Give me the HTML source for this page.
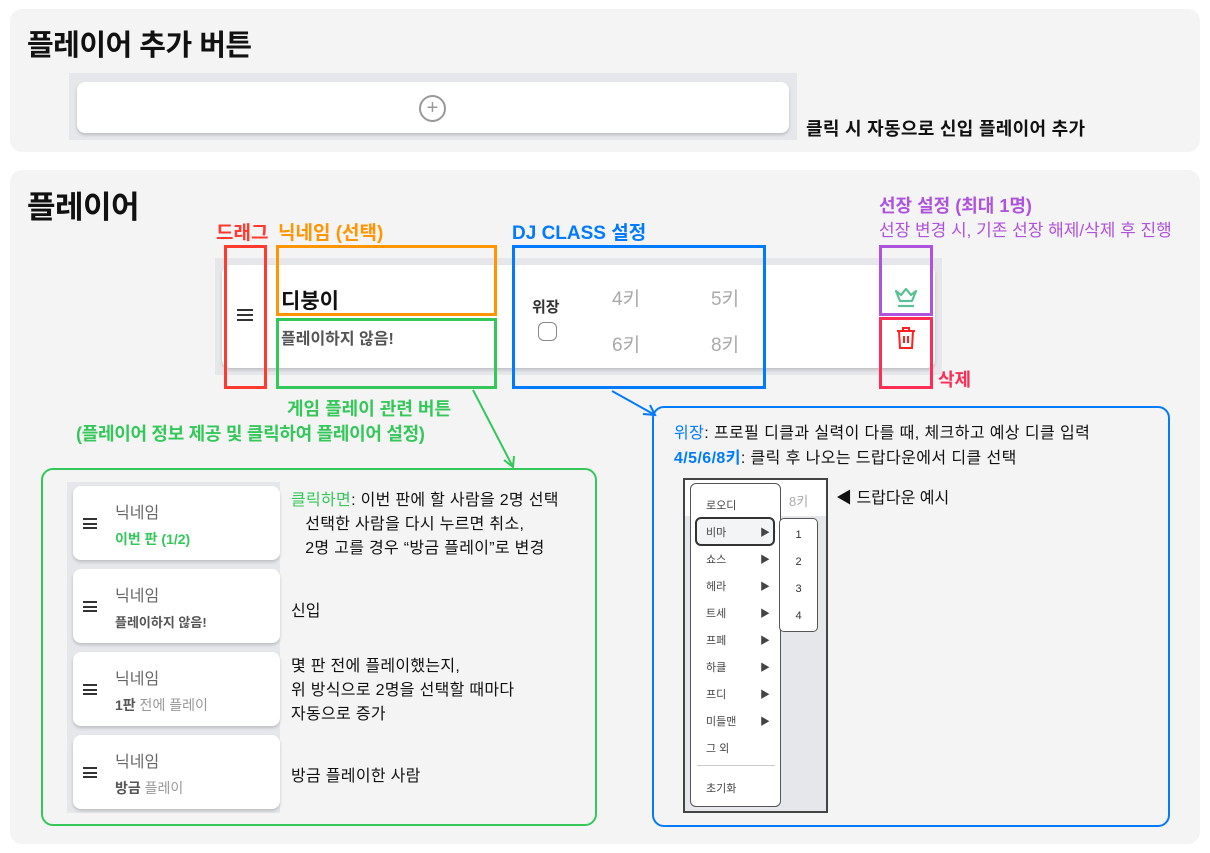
<!DOCTYPE html>
<html><head><meta charset="utf-8"><style>
*{margin:0;padding:0;box-sizing:border-box}
body{width:1210px;height:853px;background:#fff;font-family:"Liberation Sans","Noto Sans CJK KR",sans-serif;position:relative;overflow:hidden;color:#111}
.a{position:absolute;white-space:nowrap}
.panel{position:absolute;background:#f4f4f4;border-radius:12px}
.box{position:absolute;border:3px solid}
.card{position:absolute;background:#fff;border-radius:8px;box-shadow:0 2px 3px rgba(0,0,0,.18)}
.ham{position:absolute;width:16px;height:12px;border-top:2px solid #333;border-bottom:2px solid #333}
.ham:after{content:"";position:absolute;left:0;right:0;top:3px;border-top:2px solid #333}
.mi{position:absolute;left:16px;font-size:11px;color:#444}
.tri{position:absolute;left:70px;font-size:10px;color:#444}
</style></head><body>
<div class="panel" style="left:10px;top:9px;width:1190px;height:143px"></div>
<div class="a" style="left:27px;top:22px;font-size:29px;font-weight:bold;letter-spacing:-0.5px">플레이어 추가 버튼</div>
<div class="a" style="left:69px;top:73px;width:728px;height:67px;background:#e5e7eb"></div>
<div class="card" style="left:77px;top:82px;width:712px;height:51px"></div>
<div class="a" style="left:419px;top:95px;width:27px;height:27px;border:2px solid #999;border-radius:50%;text-align:center;line-height:22px;font-size:20px;color:#999">+</div>
<div class="a" style="left:806px;top:115px;font-size:18px;font-weight:bold;letter-spacing:0.3px">클릭 시 자동으로 신입 플레이어 추가</div>

<div class="panel" style="left:10px;top:170px;width:1190px;height:674px"></div>
<div class="a" style="left:27px;top:182px;font-size:31px;font-weight:bold;letter-spacing:-0.5px">플레이어</div>
<div class="a" style="left:215px;top:258px;width:727px;height:117px;background:#e5e7eb"></div>
<div class="card" style="left:222px;top:265px;width:713px;height:103px"></div>
<div class="ham" style="left:237px;top:309px"></div>
<div class="a" style="left:281px;top:285px;font-size:21px;font-weight:bold">디붕이</div>
<div class="a" style="left:281px;top:325px;font-size:16px;font-weight:bold;color:#555">플레이하지 않음!</div>
<div class="a" style="left:532px;top:296px;font-size:15px;font-weight:bold;color:#333">위장</div>
<div class="a" style="left:538px;top:322px;width:19px;height:19px;border:1.5px solid #888;border-radius:6px"></div>
<div class="a" style="left:612px;top:284px;font-size:19px;color:#aaa">4키</div>
<div class="a" style="left:711px;top:284px;font-size:19px;color:#aaa">5키</div>
<div class="a" style="left:612px;top:330px;font-size:19px;color:#aaa">6키</div>
<div class="a" style="left:711px;top:330px;font-size:19px;color:#aaa">8키</div>
<svg class="a" style="left:893px;top:285px" width="26" height="26" viewBox="0 0 26 26" fill="none" stroke="#5cbf95" stroke-width="2.2"><path d="M3 6l4 10h12l4-10-5 4-5-6-5 6z" stroke-linejoin="round"/><path d="M5 21h16"/></svg>
<svg class="a" style="left:894px;top:326px" width="24" height="24" viewBox="0 0 24 24" fill="none" stroke="#ff2020" stroke-width="2"><path d="M3 5h18M9 5V2h6v3M5 5l1 17h12l1-17M10 10v7M14 10v7"/></svg>

<div class="box" style="left:224px;top:245px;width:43px;height:144px;border-color:#ff3b30"></div>
<div class="a" style="left:216px;top:218px;font-size:19px;font-weight:bold;color:#ff3b30">드래그</div>
<div class="box" style="left:276px;top:245px;width:221px;height:71px;border-color:#ff9500"></div>
<div class="a" style="left:278px;top:218px;font-size:19px;font-weight:bold;color:#ff9500">닉네임 (선택)</div>
<div class="box" style="left:276px;top:318px;width:221px;height:71px;border-color:#34c759"></div>
<div class="box" style="left:512px;top:245px;width:254px;height:144px;border-color:#007aff"></div>
<div class="a" style="left:512px;top:218px;font-size:19px;font-weight:bold;color:#007aff">DJ CLASS 설정</div>
<div class="box" style="left:879px;top:245px;width:54px;height:71px;border-color:#af52de"></div>
<div class="box" style="left:879px;top:317px;width:54px;height:72px;border-color:#ff2d55"></div>
<div class="a" style="left:938px;top:366px;font-size:18px;font-weight:bold;color:#ff2d55">삭제</div>
<div class="a" style="left:879px;top:192px;font-size:18px;font-weight:bold;color:#af52de">선장 설정 (최대 1명)</div>
<div class="a" style="left:879px;top:216px;font-size:17px;color:#af52de">선장 변경 시, 기존 선장 해제/삭제 후 진행</div>
<div class="a" style="left:287px;top:395px;font-size:18px;font-weight:bold;color:#34c759">게임 플레이 관련 버튼</div>
<div class="a" style="left:76px;top:420px;font-size:18px;font-weight:bold;color:#34c759;letter-spacing:-0.3px">(플레이어 정보 제공 및 클릭하여 플레이어 설정)</div>
<svg class="a" style="left:0;top:0" width="1210" height="853"><path d="M473 390L513 467M504 460l9 7 1-11" stroke="#34c759" stroke-width="2" fill="none"/><path d="M612 391L655 415M643 414l12 1-5-10" stroke="#007aff" stroke-width="2" fill="none"/></svg>

<div class="a" style="left:41px;top:468px;width:556px;height:358px;border:2px solid #34c759;border-radius:12px"></div>
<div class="a" style="left:67px;top:482px;width:213px;height:331px;background:#e5e7eb"></div>
<div class="card" style="left:73px;top:486px;width:207px;height:74px"></div>
<div class="card" style="left:73px;top:569px;width:207px;height:74px"></div>
<div class="card" style="left:73px;top:652px;width:207px;height:74px"></div>
<div class="card" style="left:73px;top:735px;width:207px;height:74px"></div>
<div class="ham" style="left:83px;top:518px;width:14px;height:11px"></div>
<div class="ham" style="left:83px;top:601px;width:14px;height:11px"></div>
<div class="ham" style="left:83px;top:684px;width:14px;height:11px"></div>
<div class="ham" style="left:83px;top:767px;width:14px;height:11px"></div>
<div class="a" style="left:115px;top:499px;font-size:16px;color:#666">닉네임</div>
<div class="a" style="left:115px;top:529px;font-size:14px;font-weight:bold;color:#34c759">이번 판 (1/2)</div>
<div class="a" style="left:115px;top:582px;font-size:16px;color:#666">닉네임</div>
<div class="a" style="left:115px;top:612px;font-size:13px;font-weight:bold;color:#555">플레이하지 않음!</div>
<div class="a" style="left:115px;top:665px;font-size:16px;color:#666">닉네임</div>
<div class="a" style="left:115px;top:695px;font-size:14px;color:#999"><b style="color:#555">1판</b> 전에 플레이</div>
<div class="a" style="left:115px;top:748px;font-size:16px;color:#666">닉네임</div>
<div class="a" style="left:115px;top:778px;font-size:14px;color:#999"><b style="color:#555">방금</b> 플레이</div>
<div class="a" style="left:291px;top:489px;font-size:16px;line-height:24px;letter-spacing:0.3px"><span style="color:#34c759">클릭하면</span>: 이번 판에 할 사람을 2명 선택<br>&nbsp;&nbsp;&nbsp;선택한 사람을 다시 누르면 취소,<br>&nbsp;&nbsp;&nbsp;2명 고를 경우 “방금 플레이”로 변경</div>
<div class="a" style="left:291px;top:597px;font-size:16px">신입</div>
<div class="a" style="left:291px;top:655px;font-size:16px;line-height:24px;letter-spacing:0.3px">몇 판 전에 플레이했는지,<br>위 방식으로 2명을 선택할 때마다<br>자동으로 증가</div>
<div class="a" style="left:291px;top:762px;font-size:16px;letter-spacing:0.3px">방금 플레이한 사람</div>

<div class="a" style="left:652px;top:406px;width:518px;height:421px;border:2px solid #007aff;border-radius:12px"></div>
<div class="a" style="left:674px;top:421px;font-size:16px;line-height:25px;letter-spacing:0.4px"><span style="color:#007aff">위장</span>: 프로필 디클과 실력이 다를 때, 체크하고 예상 디클 입력<br><span style="color:#007aff;font-weight:bold">4/5/6/8키</span>: 클릭 후 나오는 드랍다운에서 디클 선택</div>
<div class="a" style="left:683px;top:478px;width:145px;height:335px;border:2px solid #444;background:#e5e7eb"></div>
<div class="a" style="left:685px;top:480px;width:141px;height:36px;background:#fff"></div>
<div class="a" style="left:789px;top:491px;font-size:13px;color:#aaa">8키</div>
<div class="a" style="left:690px;top:483px;width:91px;height:324px;background:#fff;border:1.5px solid #555;border-radius:6px"></div>
<div class="a" style="left:695px;top:517px;width:80px;height:29px;border:2px solid #333;border-radius:6px;background:#f3f4f6"></div>
<div class="a" style="left:690px;top:483px;width:91px;height:324px">
<div class="mi" style="top:14px">로오디</div>
<div class="mi" style="top:41px">비마</div><div class="tri" style="top:41px">▶</div>
<div class="mi" style="top:68px">쇼스</div><div class="tri" style="top:68px">▶</div>
<div class="mi" style="top:95px">헤라</div><div class="tri" style="top:95px">▶</div>
<div class="mi" style="top:122px">트세</div><div class="tri" style="top:122px">▶</div>
<div class="mi" style="top:149px">프페</div><div class="tri" style="top:149px">▶</div>
<div class="mi" style="top:176px">하클</div><div class="tri" style="top:176px">▶</div>
<div class="mi" style="top:203px">프디</div><div class="tri" style="top:203px">▶</div>
<div class="mi" style="top:230px">미들맨</div><div class="tri" style="top:230px">▶</div>
<div class="mi" style="top:257px">그 외</div>
<div class="a" style="left:7px;top:282px;width:78px;border-top:1px solid #ccc"></div>
<div class="mi" style="top:297px">초기화</div>
</div>
<div class="a" style="left:779px;top:518px;width:39px;height:114px;background:#fff;border:1.5px solid #555;border-radius:5px;font-size:11px;color:#333;text-align:center;line-height:27px;padding-top:3px">1<br>2<br>3<br>4</div>
<div class="a" style="left:836px;top:484px;font-size:16px">◀ 드랍다운 예시</div>
</body></html>
